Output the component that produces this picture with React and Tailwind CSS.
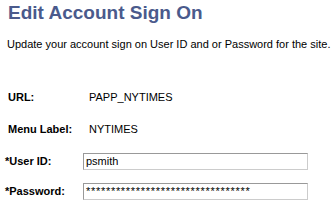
export default function App() {
  const font = { fontFamily: '"Liberation Sans", Arial, sans-serif' }
  return (
    <div className="w-[332px] h-[219px] bg-white text-black overflow-hidden" style={font}>
      <h1 className="pl-[8px] pt-[2px] text-[19px] leading-[22px] font-bold text-[#4a5a8c]">Edit Account Sign On</h1>
      <p className="pl-[7px] mt-[14px] text-[11px] leading-[13px] whitespace-nowrap">
        Update your account sign on User ID and or Password for the site.
      </p>

      <div className="mt-[40px] flex flex-col gap-[19px] text-[11px] leading-[13px]">
        <div className="flex items-center">
          <span className="w-[89px] pl-[8px] font-bold">URL:</span>
          <span>PAPP_NYTIMES</span>
        </div>
        <div className="flex items-center">
          <span className="w-[89px] pl-[8px] font-bold">Menu Label:</span>
          <span>NYTIMES</span>
        </div>
      </div>

      <div className="mt-[17px] flex flex-col gap-[13px] text-[11px]">
        <div className="flex items-center">
          <span className="w-[83px] pl-[5px] font-bold">*User ID:</span>
          <div className="w-[225px] h-[17px] border border-t-[#999] border-l-[#999] border-r-[#ccc] border-b-[#ccc] flex items-center pl-[2px] leading-[13px]">
            psmith
          </div>
        </div>
        <div className="flex items-center">
          <span className="w-[83px] pl-[5px] font-bold">*Password:</span>
          <div className="w-[225px] h-[17px] border border-t-[#999] border-l-[#999] border-r-[#ccc] border-b-[#ccc] flex items-center pl-[2px] leading-[13px] tracking-[0.7px]">
            *********************************
          </div>
        </div>
      </div>
    </div>
  )
}
